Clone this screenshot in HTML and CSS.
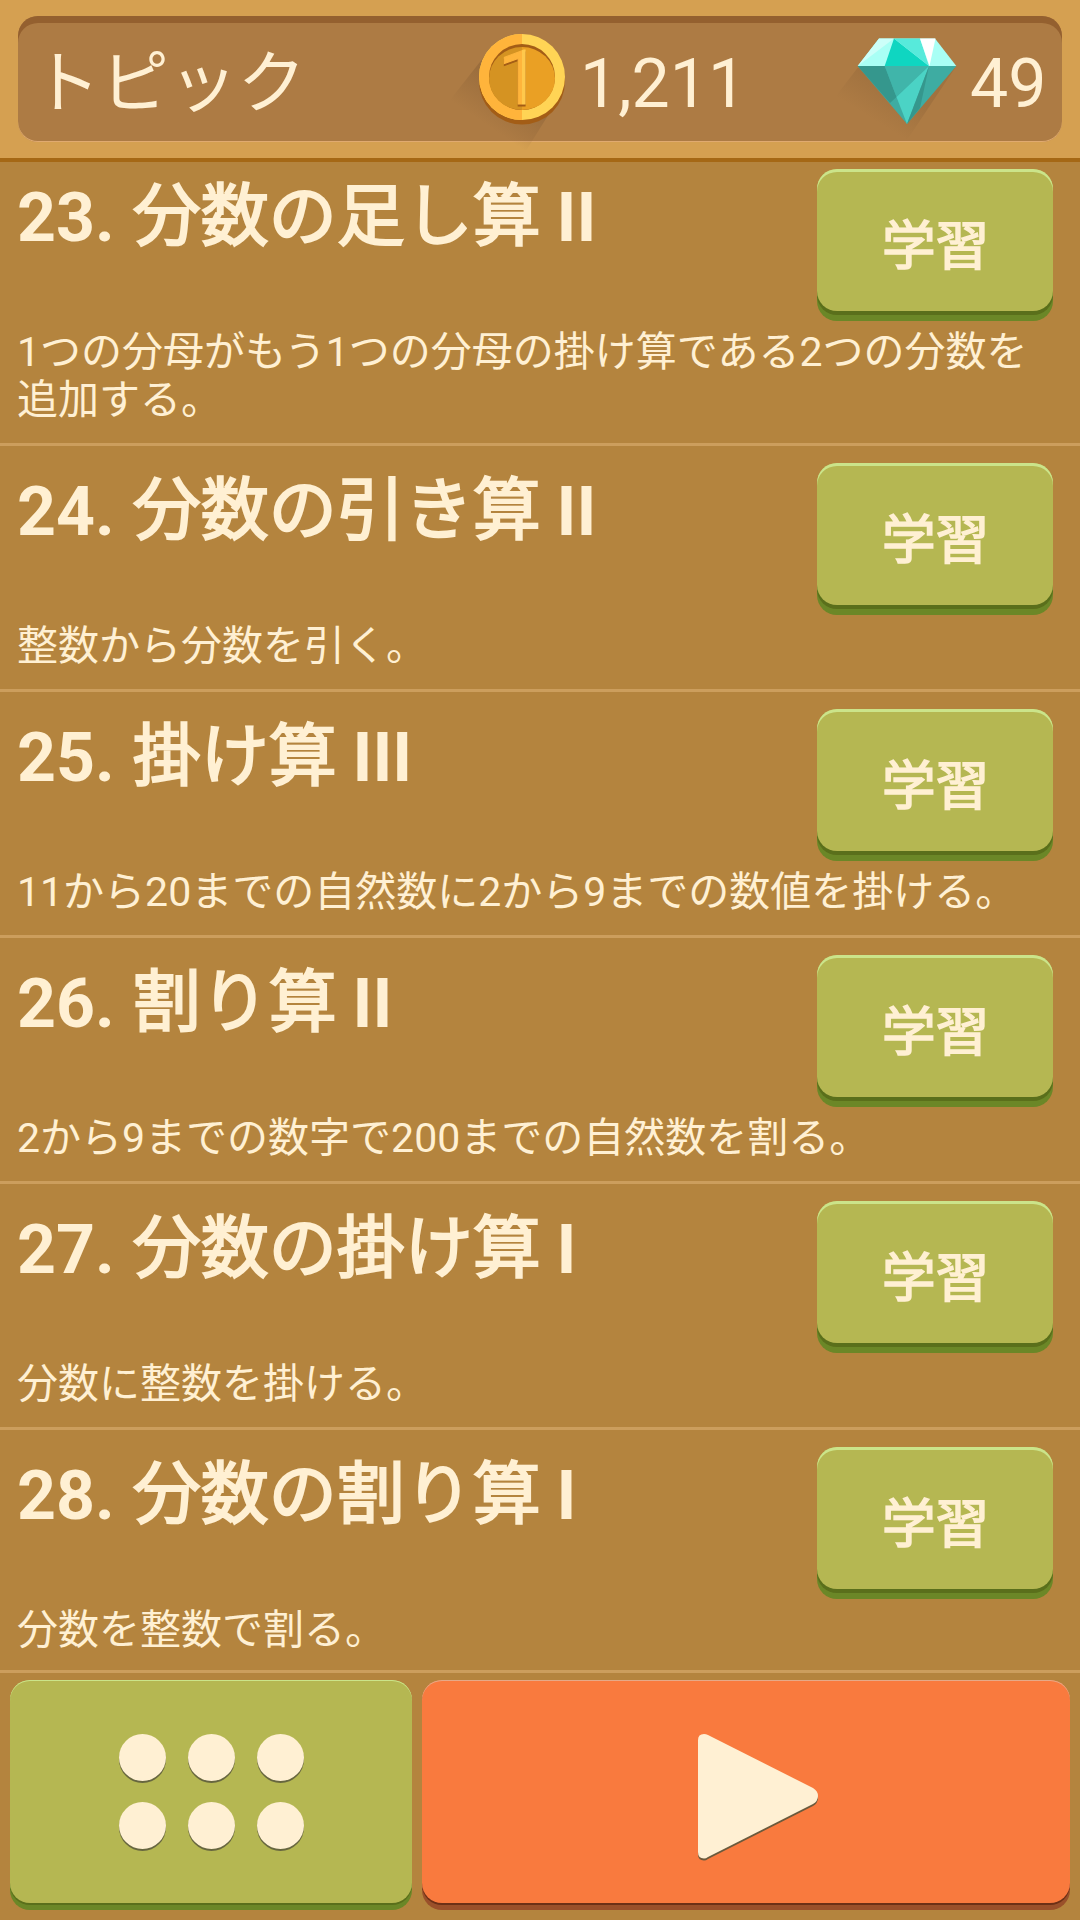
FILE: index.html
```html
<!DOCTYPE html>
<html lang="ja">
<head>
    <meta charset="UTF-8">
    <meta name="viewport" content="width=device-width, initial-scale=1.0">
    <title>トピック</title>
    <link rel="stylesheet" href="styles.css">
</head>
<body>
    <header class="header">
        <div class="header-panel">
            <h1 class="title">トピック</h1>
            <div class="coins">
                <svg class="coin-icon" width="112" height="124" viewBox="0 0 112 124">
                    <defs>
                        <linearGradient id="coin-shadow" gradientUnits="userSpaceOnUse" x1="72" y1="56" x2="38" y2="106">
                            <stop offset="0.3" stop-color="#7a5530" stop-opacity="0.35"/>
                            <stop offset="1" stop-color="#7a5530" stop-opacity="0"/>
                        </linearGradient>
                        <linearGradient id="coin-one" gradientUnits="userSpaceOnUse" x1="0" y1="0" x2="112" y2="0">
                            <stop offset="0.6429" stop-color="#ffb43b"/>
                            <stop offset="0.6429" stop-color="#ffc84c"/>
                        </linearGradient>
                    </defs>
                    <path d="M37 33 L0 80 L74 134 L107 81 Z" fill="url(#coin-shadow)"/>
                    <circle cx="72" cy="61.5" r="43" fill="#a35d16"/>
                    <circle cx="72" cy="57" r="43" fill="#ffd455"/>
                    <path d="M72 14 a43 43 0 0 0 0 86 z" fill="#ffb43b"/>
                    <circle cx="72" cy="57" r="33" fill="#a35d16"/>
                    <path d="M72 27 a33 31.5 0 0 1 0 63 z" fill="#eaa024"/>
                    <path d="M72 27 a33 31.5 0 0 0 0 63 z" fill="#d59322"/>
                    <text class="coin-value" x="48" y="86" fill="#a35d16" stroke="#a35d16">1</text>
                    <text class="coin-value" x="48" y="84" fill="url(#coin-one)" stroke="url(#coin-one)">1</text>
                </svg>
                <span class="amount">1,211</span>
            </div>
            <div class="gems">
                <svg class="gem-icon" width="124" height="124" viewBox="0 0 124 124">
                    <defs>
                        <linearGradient id="gem-shadow" gradientUnits="userSpaceOnUse" x1="70" y1="60" x2="44" y2="102">
                            <stop offset="0.2" stop-color="#7a5530" stop-opacity="0.25"/>
                            <stop offset="1" stop-color="#7a5530" stop-opacity="0"/>
                        </linearGradient>
                    </defs>
                    <path d="M24.5 48 L0 80 L66 132 L122 48 Z" fill="url(#gem-shadow)"/>
                    <path d="M46 18.5 L102 18.5 L123.3 46 L24.7 46 Z" fill="#a9fff5"/>
                    <path d="M46 18.5 H61 L24.7 46 Z" fill="#ccfff9"/>
                    <path d="M61 18.5 L96 46 H51.7 Z" fill="#0fd6c1"/>
                    <path d="M61 18.5 H87 L96 46 Z" fill="#57eadb"/>
                    <path d="M87 18.5 H102.5 L96.5 46 Z" fill="#fff"/>
                    <path d="M24.7 46 H123.3 L74 104 Z" fill="#3eaca2"/>
                    <path d="M24.7 46 H51.7 L63.5 77 L57 83 Z" fill="#35978d"/>
                    <path d="M51.7 46 H96 L63.5 77 Z" fill="#40b5aa"/>
                    <path d="M96 46 L63.5 77 L74 104 Z" fill="#4bd3c5"/>
                    <path d="M96 46 L87 88 L74 104 Z" fill="#35978d"/>
                </svg>
                <span class="amount">49</span>
            </div>
        </div>
    </header>

    <main class="topics">
        <section class="topic">
            <div class="topic-head">
                <h2>23. <span class="heavy">分数の足し算</span> II</h2>
                <button class="learn heavy">学習</button>
            </div>
            <p>1つの分母がもう1つの分母の掛け算である2つの分数を追加する。</p>
        </section>
        <section class="topic">
            <div class="topic-head">
                <h2>24. <span class="heavy">分数の引き算</span> II</h2>
                <button class="learn heavy">学習</button>
            </div>
            <p>整数から分数を引く。</p>
        </section>
        <section class="topic">
            <div class="topic-head">
                <h2>25. <span class="heavy">掛け算</span> III</h2>
                <button class="learn heavy">学習</button>
            </div>
            <p>11から20までの自然数に2から9までの数値を掛ける。</p>
        </section>
        <section class="topic">
            <div class="topic-head">
                <h2>26. <span class="heavy">割り算</span> II</h2>
                <button class="learn heavy">学習</button>
            </div>
            <p>2から9までの数字で200までの自然数を割る。</p>
        </section>
        <section class="topic">
            <div class="topic-head">
                <h2>27. <span class="heavy">分数の掛け算</span> I</h2>
                <button class="learn heavy">学習</button>
            </div>
            <p>分数に整数を掛ける。</p>
        </section>
        <section class="topic">
            <div class="topic-head">
                <h2>28. <span class="heavy">分数の割り算</span> I</h2>
                <button class="learn heavy">学習</button>
            </div>
            <p>分数を整数で割る。</p>
        </section>
    </main>

    <footer class="footer">
        <button class="menu-button" aria-label="メニュー">
            <span class="dot"></span><span class="dot"></span><span class="dot"></span>
            <span class="dot"></span><span class="dot"></span><span class="dot"></span>
        </button>
        <button class="play-button" aria-label="スタート">
            <svg width="120" height="128" viewBox="0 0 120 128">
                <path transform="translate(0 2)" fill="#6b5a3c" d="M0 6 Q0 0 6 0 Q8 0 10 1 L115 54 Q120 57 120 62 Q120 67 115 70 L10 123 Q8 124.5 6 124.5 Q0 124.5 0 118 Z"/>
                <path fill="#fff0d3" d="M0 6 Q0 0 6 0 Q8 0 10 1 L115 54 Q120 57 120 62 Q120 67 115 70 L10 123 Q8 124.5 6 124.5 Q0 124.5 0 118 Z"/>
            </svg>
        </button>
    </footer>
</body>
</html>
```

FILE: styles.css
```css
* {
    box-sizing: border-box;
}

body {
    margin: 0;
    height: 1920px;
    display: flex;
    flex-direction: column;
    overflow: hidden;
    background-color: #b4843e;
    color: #fff0d3;
    font-family: Roboto, "Noto Sans CJK JP", sans-serif;
}

h1, h2, p {
    margin: 0;
}

button {
    border: none;
    padding: 0;
    color: inherit;
    font-family: inherit;
}

/* Header */
.header {
    flex: none;
    height: 162px;
    padding: 16px 18px;
    background-color: #d5a051;
    border-bottom: 4px solid #a56815;
}

.header-panel {
    display: flex;
    height: 126px;
    padding-left: 14px;
    border-radius: 20px;
    background-color: #ad7b44;
    box-shadow: inset 0 7px 0 #94602f, inset 0 -1px 0 #e0aa70;
}

.title {
    width: 400px;
    font-size: 68.5px;
    font-weight: 400;
    line-height: 136px;
}

.coins, .gems {
    display: flex;
}

.coins {
    margin-left: 18px;
    width: 383px;
}

.coin-icon, .gem-icon {
    flex: none;
    margin-top: 4px;
    overflow: visible;
}

.coin-value {
    font-size: 76px;
}

.amount {
    margin-left: 18px;
    font-size: 68px;
    line-height: 136px;
}

.gems .amount {
    margin-left: 13px;
}

/* Topic list */
.topics {
    flex: 1;
    min-height: 0;
    overflow: hidden;
}

.topic {
    height: 246px;
    padding: 17px 27px 0 17px;
    border-bottom: 3px solid #cc9e5d;
}

.topic:first-child {
    height: 294px;
    margin-top: -10px;
}

.topic-head {
    display: flex;
    justify-content: space-between;
    height: 159px;
}

.topic h2 {
    font-size: 68px;
    line-height: 98px;
}

/* regular weight thickened with an outline */
.heavy {
    font-weight: 400;
    -webkit-text-stroke: 0.031em #fff0d3;
}

.topic h2 .heavy {
    margin: 0 -1px 0 1px;
    line-height: 1;
    vertical-align: 1px;
}

.topic p {
    width: 1030px;
    font-size: 41px;
    line-height: 48px;
}

.learn {
    width: 236px;
    height: 142px;
    padding: 2px 0 0 1px;
    border-radius: 20px;
    background-color: #b5b752;
    box-shadow: inset 0 3px 0 #cbe48a, 0 4px 0 #5a6f1b, 0 10px 0 #6b8727;
    font-size: 53.5px;
}

/* Bottom bar */
.footer {
    flex: none;
    display: flex;
    gap: 10px;
    height: 250px;
    padding: 7px 10px 17px;
    border-top: 3px solid #cc9e5d;
}

.menu-button, .play-button {
    border-radius: 20px;
}

.menu-button {
    display: grid;
    grid-template-columns: repeat(3, 47px);
    gap: 21px 22px;
    place-content: center;
    width: 402px;
    background-color: #b5b752;
    box-shadow: inset 0 1px 0 #cbe48a, 0 2px 0 #5a6f1b, 0 7px 0 #6b8727;
}

.dot {
    height: 47px;
    border-radius: 50%;
    background-color: #fff0d3;
    box-shadow: 0 2px 0 #67663f;
}

.play-button {
    display: flex;
    align-items: center;
    justify-content: center;
    width: 648px;
    padding: 12px 0 0 24px;
    background-color: #f97a3e;
    box-shadow: inset 0 1px 0 #e6a988, 0 2px 0 #6d3016, 0 7px 0 #9a502a;
}
```
